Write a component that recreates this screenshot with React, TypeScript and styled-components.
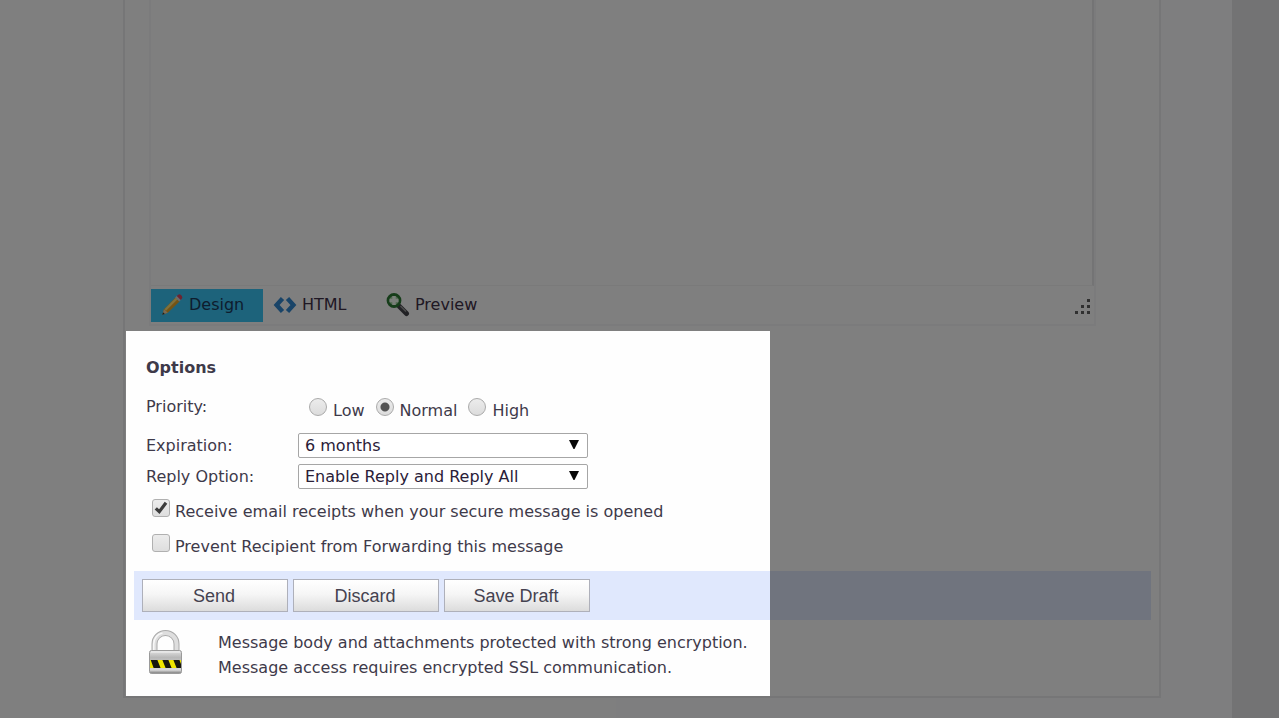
import React, { useState } from "react";
import styled, { createGlobalStyle } from "styled-components";

const GlobalStyle = createGlobalStyle`
  * { box-sizing: border-box; }
  body {
    margin: 0;
    background: #fff;
    color: #3e3a4a;
    font: 16px/24px "DejaVu Sans", Verdana, sans-serif;
    overflow-x: hidden;
  }
`;

const Page = styled.div`
  display: flex;
  min-height: 100vh;
  overflow: hidden;
  background: #fefeff;
`;

const Main = styled.main`
  flex: 1;
  min-width: 0;
  padding: 0 71px 20px 123px;
  background: linear-gradient(90deg, #fefefe 50%, #fdfdff 50%);
`;

const SideStrip = styled.aside`
  flex: none;
  width: 47px;
  background: #e6e6e9;
`;

const Card = styled.form`
  padding: 0 8px 0 9px;
  border: solid #ececee;
  border-width: 0 2px 2px;
  background: #fefefe;
`;

const Editor = styled.section`
  margin: 0 55px 0 15px;
  border: solid #f7f7f8;
  border-width: 0 2px 2px;
`;

const EditorBody = styled.textarea`
  display: block;
  width: 100%;
  height: 286px;
  padding: 12px;
  border: solid #f4f4f5;
  border-width: 0 2px 1px 0;
  border-right-color: #e8e8ea;
  background: transparent;
  font: inherit;
  resize: none;
  outline: none;
`;

const EditorFooter = styled.div`
  display: flex;
  align-items: center;
  justify-content: space-between;
  height: 38px;
  padding-right: 3px;
`;

const Modes = styled.div`
  display: flex;
  gap: 1px;
`;

const ModeButton = styled.button<{ $active?: boolean }>`
  display: flex;
  align-items: center;
  gap: 5px;
  width: 112px;
  height: 33px;
  padding: 0 8px 0 9px;
  border: 0;
  background: ${(p) => (p.$active ? "#3ac6f6" : "transparent")};
  color: ${(p) => (p.$active ? "#1c3a5c" : "#3e3048")};
  font: inherit;
`;

const OptionsArea = styled.section`
  position: relative;
  margin-top: 5px;
`;

const Spotlight = styled.div`
  position: absolute;
  top: 0;
  bottom: 0;
  left: -8px;
  width: 644px;
  box-shadow: 0 0 0 2000px rgba(0, 0, 0, 0.5);
  pointer-events: none;
`;

const OptionsBody = styled.div`
  padding: 25px 12px 12px;
`;

const Heading = styled.h2`
  margin: 0 0 15px;
  font-size: 16px;
  line-height: 24px;
`;

const FieldRow = styled.div`
  display: grid;
  grid-template-columns: 152px 290px;
  align-items: center;
  margin-bottom: 6px;
`;

const PriorityRow = styled.div`
  display: grid;
  grid-template-columns: 163px auto;
  align-items: start;
  margin-bottom: 10px;
`;

const Radios = styled.div`
  display: flex;
  gap: 11px;
`;

const Choice = styled.label`
  display: flex;
  align-items: flex-start;
  gap: 6px;
`;

const ChoiceText = styled.span`
  padding-top: 4px;
`;

const Radio = styled.input`
  appearance: none;
  width: 18px;
  height: 18px;
  margin: 3px 0 0;
  border: 1px solid #aaa;
  border-radius: 50%;
  background: linear-gradient(#ececec, #dcdcdc);
  &:checked {
    background: radial-gradient(circle, #555 4px, transparent 5px), linear-gradient(#ececec, #dcdcdc);
  }
`;

const SelectBox = styled.div`
  position: relative;
  svg {
    position: absolute;
    top: 7px;
    right: 9px;
    pointer-events: none;
  }
`;

const Select = styled.select`
  display: block;
  appearance: none;
  width: 100%;
  height: 25px;
  padding: 0 24px 0 6px;
  border: 1px solid #a6a6a6;
  border-radius: 2px;
  background: #fff;
  color: #2a2038;
  font: inherit;
`;

const Checks = styled.div`
  display: flex;
  flex-direction: column;
  gap: 10px;
  padding: 4px 0 0 6px;
`;

const CheckLine = styled.label`
  display: flex;
  align-items: flex-start;
  gap: 5px;
`;

const CheckText = styled.span`
  padding-top: 1px;
`;

const CheckMark = styled.span`
  position: relative;
  width: 18px;
  height: 18px;
  svg {
    position: absolute;
    top: 0;
    left: 0;
    pointer-events: none;
  }
`;

const Checkbox = styled.input`
  display: block;
  appearance: none;
  width: 18px;
  height: 18px;
  margin: 0;
  border: 1px solid #b0b0b0;
  border-radius: 3px;
  background: linear-gradient(#ececec, #dedede);
`;

const ActionBar = styled.div`
  display: flex;
  gap: 6px;
  padding: 8px;
  background: #e0e8fd;
`;

const ActionButton = styled.button`
  width: 146px;
  height: 33px;
  padding: 0 2px 0 0;
  border: 1px solid #aeb0ba;
  background: linear-gradient(#fff, #f6f6f6 45%, #dcdcdc);
  color: #454250;
  font: 18px/24px "Liberation Sans", Arial, sans-serif;

  & + & {
    margin-left: -1px;
  }
`;

const Notice = styled.div`
  display: flex;
  gap: 35px;
  padding: 10px 14px 16px;
  p {
    margin: 0;
    line-height: 25px;
  }
`;

const PencilIcon = () => (
  <svg width="24" height="24" viewBox="0 0 24 24" aria-hidden="true">
    <path d="M2.5 21.5 4 16.2 15.5 4.5l4 4L7.8 19.8z" fill="#e9a92b" />
    <path d="M4.6 16 15.8 4.8l1.6 1.6L6 17.8z" fill="#ffe27a" />
    <path d="m15.2 4.6 2-2 4 4-2 2z" fill="#d4d8de" />
    <path d="m16.7 3 1.5-1.3q1.4-1 2.8.4l.8.8q1.2 1.5 0 2.8L20.7 7z" fill="#d94862" />
    <path d="M2.5 21.5 4 16.2l3.8 3.6z" fill="#f5d3a5" />
    <path d="m2.3 21.8.7-2.6 1.8 1.9z" fill="#333" />
  </svg>
);

const CodeIcon = () => (
  <svg width="24" height="24" viewBox="0 0 24 24" fill="none" stroke="#3388d0" strokeWidth="4.4" aria-hidden="true">
    <path d="M9.500 5.500 3.600 12l5.900 6.500M14.500 5.500 20.400 12l-5.900 6.500" />
  </svg>
);

const PreviewIcon = () => (
  <svg width="24" height="24" viewBox="0 0 24 24" aria-hidden="true">
    <path d="m13.500 13.500 7 7" stroke="#45454a" strokeWidth="5" strokeLinecap="round" />
    <path d="m14.500 13 5.500 5.500" stroke="#999" strokeWidth="1.400" />
    <circle cx="8" cy="7.500" r="6" fill="#9fd49f" stroke="#2c7a34" strokeWidth="2.800" />
    <path d="M8 3v9M3.500 7.500h9" stroke="#f4fff4" strokeWidth="3.400" />
  </svg>
);

const GripIcon = () => (
  <svg width="17" height="17" viewBox="0 0 17 17" fill="#606060" aria-hidden="true">
    <path d="M13 2h3v3h-3zM7 8h3v3H7zM13 8h3v3h-3zM1 14h3v3H1zM7 14h3v3H7zM13 14h3v3h-3z" />
  </svg>
);

const ArrowIcon = () => (
  <svg width="10" height="9" viewBox="0 0 10 9" aria-hidden="true">
    <path d="M0 0h10L5.500 9h-1z" fill="#080808" />
  </svg>
);

const TickIcon = () => (
  <svg width="18" height="18" viewBox="0 0 18 18" fill="none" stroke="#3c3c3c" strokeWidth="3.200" aria-hidden="true">
    <path d="m3.800 9.300 3.500 3.400 6.700-9" />
  </svg>
);

const LockIcon = () => (
  <svg width="35" height="46" viewBox="0 0 35 46" aria-hidden="true">
    <defs>
      <linearGradient id="lockBody" x1="0" y1="0" x2="0" y2="1">
        <stop offset="0" stopColor="#e2e2e2" />
        <stop offset="0.300" stopColor="#b8b8b8" />
        <stop offset="0.850" stopColor="#d8d8d8" />
        <stop offset="1" stopColor="#777" />
      </linearGradient>
      <clipPath id="lockBand"><path d="M2 30h31v8H2z" /></clipPath>
    </defs>
    <path d="M6.500 22v-8a11 11 0 0 1 22 0v8" fill="none" stroke="#aaa" strokeWidth="6" />
    <path d="M6.500 22v-8a11 11 0 0 1 22 0v8" fill="none" stroke="#dedede" strokeWidth="4" />
    <path d="M5.700 22v-8q.5-9 8.800-11" fill="none" stroke="#f8f8f8" strokeWidth="1.500" />
    <rect x="1.500" y="20.500" width="32" height="23" rx="2" fill="url(#lockBody)" stroke="#9a9a9a" />
    <path d="M3 22h29" stroke="#f2f2f2" />
    <g clipPath="url(#lockBand)">
      <path d="M2 30h31v8H2z" fill="#17170f" />
      <path d="M1 28h1l4 11H1zM9 29h5l4 10h-5zM20 29h5l4 10h-5zM31 29h4v10z" fill="#f0e600" />
    </g>
  </svg>
);

export default function App() {
  const [priority, setPriority] = useState("Normal");
  const [receipts, setReceipts] = useState(true);
  const [noForward, setNoForward] = useState(false);

  return (
    <>
      <GlobalStyle />
      <Page>
        <Main>
          <Card onSubmit={(e) => e.preventDefault()}>
            <Editor>
              <EditorBody aria-label="Message body" />
              <EditorFooter>
                <Modes>
                  <ModeButton type="button" $active><PencilIcon />Design</ModeButton>
                  <ModeButton type="button"><CodeIcon />HTML</ModeButton>
                  <ModeButton type="button"><PreviewIcon />Preview</ModeButton>
                </Modes>
                <GripIcon />
              </EditorFooter>
            </Editor>

            <OptionsArea>
              <OptionsBody>
                <Heading>Options</Heading>
                <PriorityRow>
                  <span id="priority-label">Priority:</span>
                  <Radios role="radiogroup" aria-labelledby="priority-label">
                    {["Low", "Normal", "High"].map((level) => (
                      <Choice key={level}>
                        <Radio
                          type="radio"
                          name="priority"
                          checked={priority === level}
                          onChange={() => setPriority(level)}
                        />
                        <ChoiceText>{level}</ChoiceText>
                      </Choice>
                    ))}
                  </Radios>
                </PriorityRow>
                <FieldRow>
                  <label htmlFor="expiration">Expiration:</label>
                  <SelectBox>
                    <Select id="expiration"><option>6 months</option></Select>
                    <ArrowIcon />
                  </SelectBox>
                </FieldRow>
                <FieldRow>
                  <label htmlFor="reply">Reply Option:</label>
                  <SelectBox>
                    <Select id="reply"><option>Enable Reply and Reply All</option></Select>
                    <ArrowIcon />
                  </SelectBox>
                </FieldRow>
                <Checks>
                  <CheckLine>
                    <CheckMark>
                      <Checkbox type="checkbox" checked={receipts} onChange={(e) => setReceipts(e.target.checked)} />
                      {receipts && <TickIcon />}
                    </CheckMark>
                    <CheckText>Receive email receipts when your secure message is opened</CheckText>
                  </CheckLine>
                  <CheckLine>
                    <CheckMark>
                      <Checkbox type="checkbox" checked={noForward} onChange={(e) => setNoForward(e.target.checked)} />
                      {noForward && <TickIcon />}
                    </CheckMark>
                    <CheckText>Prevent Recipient from Forwarding this message</CheckText>
                  </CheckLine>
                </Checks>
              </OptionsBody>
              <ActionBar>
                <ActionButton type="submit">Send</ActionButton>
                <ActionButton type="button">Discard</ActionButton>
                <ActionButton type="button">Save Draft</ActionButton>
              </ActionBar>
              <Notice>
                <LockIcon />
                <p>
                  Message body and attachments protected with strong encryption.
                  <br />
                  Message access requires encrypted SSL communication.
                </p>
              </Notice>
              <Spotlight />
            </OptionsArea>
          </Card>
        </Main>
        <SideStrip />
      </Page>
    </>
  );
}
